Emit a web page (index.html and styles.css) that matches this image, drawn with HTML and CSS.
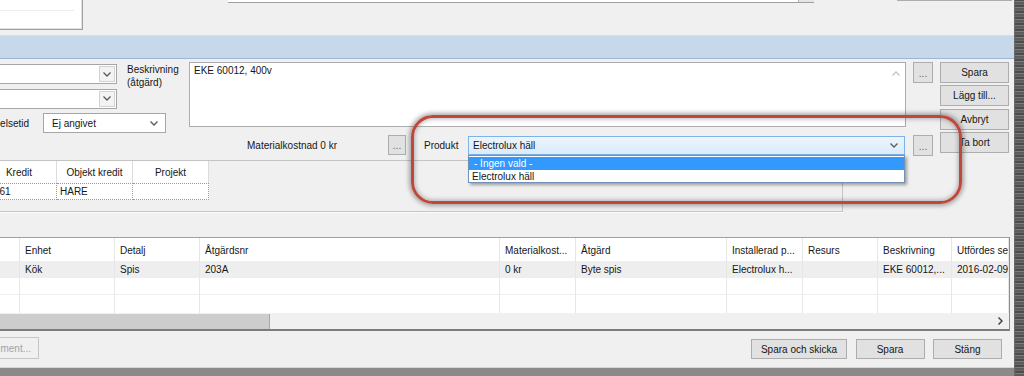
FILE: index.html
```html
<!DOCTYPE html>
<html lang="sv">
<head>
    <meta charset="utf-8"/>
    <title>Åtgärd</title>
    <link rel="stylesheet" href="styles.css">
</head>
<body>
<div class="screen">
    <div class="window">
        <div class="top">
            <div class="list-box"><div class="list-row"></div></div>
            <div class="field-box"><span class="field-arrow"></span></div>
            <div class="button-edge"></div>
        </div>
        <div class="band"></div>

        <div class="form">
            <div class="form-main">
                <div class="upper">
                    <div class="fields">
                        <div class="combo span2">
                            <span class="combo-btn"><svg width="8" height="5" viewBox="0 0 8 5"><polyline points="0.5,0.5 4,4 7.5,0.5"/></svg></span>
                        </div>
                        <div class="combo span2 row2">
                            <span class="combo-btn"><svg width="8" height="5" viewBox="0 0 8 5"><polyline points="0.5,0.5 4,4 7.5,0.5"/></svg></span>
                        </div>
                        <div class="clip-label">Händelsetid</div>
                        <div class="combo plain">
                            <span>Ej angivet</span>
                            <svg width="8" height="5" viewBox="0 0 8 5"><polyline points="0.5,0.5 4,4 7.5,0.5"/></svg>
                        </div>
                        <div class="desc-label">Beskrivning<br>(åtgärd)</div>
                    </div>
                    <div class="desc">
                        <span class="desc-text">EKE 60012, 400v</span>
                        <span class="desc-scroll"><svg width="8" height="5" viewBox="0 0 8 5"><polyline points="0.5,4.5 4,1 7.5,4.5"/></svg></span>
                    </div>
                    <div class="dots">...</div>
                </div>

                <div class="mid">
                    <span class="cost">Materialkostnad 0 kr</span>
                    <div class="dots small">...</div>
                    <span class="prod-label">Produkt</span>
                    <div class="prod-combo">
                        <span>Electrolux häll</span>
                        <svg width="8" height="5" viewBox="0 0 8 5"><polyline points="0.5,0.5 4,4 7.5,0.5"/></svg>
                        <div class="drop">
                            <div class="drop-item active">- Ingen vald -</div>
                            <div class="drop-item">Electrolux häll</div>
                        </div>
                    </div>
                    <div class="dots">...</div>
                </div>

                <div class="panel">
                    <div class="mini">
                        <div class="mini-head first">Kredit</div>
                        <div class="mini-head">Objekt kredit</div>
                        <div class="mini-head">Projekt</div>
                        <div class="mini-cell cut">061</div>
                        <div class="mini-cell">HARE</div>
                        <div class="mini-cell"></div>
                    </div>
                </div>
            </div>

            <div class="side">
                <div class="btn">Spara</div>
                <div class="btn">Lägg till...</div>
                <div class="btn">Avbryt</div>
                <div class="btn">Ta bort</div>
            </div>
        </div>

        <div class="grid">
            <div class="row head">
                <span></span><span>Enhet</span><span>Detalj</span><span>Åtgärdsnr</span><span>Materialkost...</span><span>Åtgärd</span><span>Installerad p...</span><span>Resurs</span><span>Beskrivning</span><span>Utfördes senast</span>
            </div>
            <div class="row data selected">
                <span></span><span>Kök</span><span>Spis</span><span>203A</span><span>0 kr</span><span>Byte spis</span><span>Electrolux h...</span><span></span><span>EKE 60012,...</span><span>2016-02-09</span>
            </div>
            <div class="row data">
                <span></span><span></span><span></span><span></span><span></span><span></span><span></span><span></span><span></span><span></span>
            </div>
            <div class="row data last">
                <span></span><span></span><span></span><span></span><span></span><span></span><span></span><span></span><span></span><span></span>
            </div>
            <div class="hscroll">
                <div class="thumb"></div>
                <svg class="hs-arrow" width="5" height="8" viewBox="0 0 5 8"><polyline points="0.5,0.5 4,4 0.5,7.5"/></svg>
            </div>
        </div>

        <div class="bottom">
            <div class="btn disabled">Dokument...</div>
            <div class="actions">
                <div class="btn wide">Spara och skicka</div>
                <div class="btn">Spara</div>
                <div class="btn">Stäng</div>
            </div>
        </div>
        <div class="edge"></div>
    </div>
    <div class="desk"></div>

    <div class="callout"></div>
</div>
</body>
</html>
```

FILE: styles.css
```css
* {
    box-sizing: border-box;
}
body {
    margin: 0;
    width: 1024px;
    height: 376px;
    overflow: hidden;
    background: #f0f0f0;
    font-family: "Liberation Sans", Arial, sans-serif;
    font-size: 10px;
    color: #161616;
}
svg polyline {
    fill: none;
    stroke: #5a5a5a;
    stroke-width: 1.3;
}
.screen {
    position: relative;
    display: flex;
    height: 376px;
}
.window {
    width: 1015px;
    display: flex;
    flex-direction: column;
    border-right: 1px solid #6a6a6a;
}
.desk {
    flex: 1;
    background: repeating-linear-gradient(0deg, #5c5c5c 0 2px, #7c7c7c 2px 3px, #4c4c4c 3px 5px, #686868 5px 6px);
}

/* top strip */
.top {
    height: 35px;
    display: flex;
    align-items: flex-start;
}
.list-box {
    width: 83px;
    height: 30px;
    background: #fff;
    border-right: 1px solid #a0a0a0;
    border-bottom: 1px solid #a0a0a0;
    box-shadow: inset -1px -1px 0 #e2e2e2;
    padding-top: 10px;
}
.list-row {
    height: 1px;
    margin-right: 8px;
    background: #ececec;
}
.field-box {
    margin-left: 145px;
    width: 586px;
    height: 3px;
    display: flex;
    justify-content: flex-end;
    background: #fff;
    border-bottom: 1px solid #a0a0a0;
}
.field-arrow {
    width: 16px;
    background: #e6e6e6;
    border-left: 1px solid #b0b0b0;
}
.button-edge {
    margin-left: 83px;
    width: 115px;
    height: 1px;
    background: #adadad;
}
.band {
    height: 24px;
    background: #c7d8ea;
    border-top: 1px solid #d3e0ee;
    border-bottom: 1px solid #9fb5d3;
}

/* form */
.form {
    height: 178px;
    display: flex;
    gap: 7px;
    padding-top: 3px;
}
.form-main {
    width: 933px;
    display: flex;
    flex-direction: column;
}
.upper {
    height: 73px;
    display: flex;
    align-items: flex-start;
}
.fields {
    width: 189px;
    display: grid;
    grid-template-columns: 43px 74px 10px 62px;
    grid-template-rows: 20px 20px 20px;
    row-gap: 4.5px;
    padding-top: 2px;
}
.combo {
    height: 20px;
    background: #fff;
    border: 1px solid #a6a6a6;
    display: flex;
    align-items: center;
}
.combo.span2 {
    grid-column: 1 / 3;
    grid-row: 1;
    border-left: none;
}
.combo.row2 {
    grid-row: 2;
}
.combo-btn {
    margin: 1px 1px 1px auto;
    width: 16px;
    height: 16px;
    border: 1px solid #d2d2d2;
    background: #f3f3f3;
    display: flex;
    align-items: center;
    justify-content: center;
}
.combo.plain {
    grid-column: 2 / 5;
    grid-row: 3;
    width: 123px;
    padding: 0 7px 0 8px;
    justify-content: space-between;
}
.clip-label {
    grid-column: 1;
    grid-row: 3;
    display: flex;
    justify-content: flex-end;
    align-items: center;
    overflow: hidden;
    white-space: nowrap;
    padding-right: 14px;
}
.desc-label {
    grid-column: 4;
    grid-row: 1 / 3;
    line-height: 12.5px;
}
.desc {
    width: 717px;
    height: 65px;
    background: #fff;
    border: 1px solid #acacac;
    display: flex;
    padding: 2px 0 0 4px;
    line-height: 11px;
}
.desc-scroll {
    margin-left: auto;
    width: 18px;
    display: flex;
    justify-content: center;
    padding-top: 6px;
}
.desc-scroll polyline {
    stroke: #c4c4c4;
}
.dots {
    width: 20px;
    height: 21px;
    margin-left: 7px;
    background: #e1e1e1;
    border: 1px solid #adadad;
    color: #666;
    display: flex;
    justify-content: center;
    align-items: flex-end;
    padding-bottom: 3px;
    line-height: 1;
}
.mid {
    height: 20px;
    display: flex;
    align-items: center;
    padding-left: 247px;
}
.cost {
    width: 141px;
}
.dots.small {
    width: 18px;
    height: 20px;
    margin-left: 0;
}
.prod-label {
    width: 44px;
    margin-left: 18px;
}
.prod-combo {
    position: relative;
    width: 437px;
    height: 19px;
    display: flex;
    align-items: center;
    justify-content: space-between;
    padding: 0 6px 0 4px;
    background: linear-gradient(#edf5fd, #d9ebfb);
    border: 1px solid #7db3e8;
}
.drop {
    position: absolute;
    z-index: 2;
    top: 18px;
    left: -1px;
    width: 437px;
    height: 28px;
    background: #fff;
    border: 1px solid #7390b8;
    box-shadow: 2px 2px 3px rgba(0, 0, 0, 0.35);
    padding-top: 1px;
}
.drop-item {
    height: 13px;
    line-height: 13px;
    padding-left: 3px;
}
.drop-item.active {
    background: #3399ff;
    color: #fff;
    padding-left: 5px;
}
.mid > .dots:last-child {
    margin-left: 8px;
}
.panel {
    margin-top: 5px;
    width: 843px;
    height: 52px;
    border: 1px solid #c4c4c4;
    border-left: none;
    box-shadow: 0 1px 0 #fdfdfd;
}
.mini {
    width: 209px;
    display: grid;
    grid-template-columns: 57px 76px 76px;
}
.mini-head {
    height: 22px;
    background: #fff;
    border-right: 1px solid #dcdcdc;
    display: flex;
    align-items: center;
    justify-content: center;
}
.mini-head.first {
    justify-content: flex-end;
    padding-right: 24px;
}
.mini-cell {
    height: 17px;
    background: #fff;
    border-top: 1px dotted #9a9a9a;
    border-right: 1px dotted #9a9a9a;
    border-bottom: 1px dotted #9a9a9a;
    padding-left: 3px;
    line-height: 15px;
    overflow: hidden;
    white-space: nowrap;
}
.mini-cell.cut {
    text-indent: -9px;
}
.side {
    width: 69px;
    display: flex;
    flex-direction: column;
    gap: 2.4px;
}
.btn {
    height: 21px;
    background: #e1e1e1;
    border: 1px solid #adadad;
    display: flex;
    align-items: center;
    justify-content: center;
    white-space: nowrap;
}

/* main grid */
.grid {
    margin-right: 4px;
    border-top: 1px solid #a0a0a0;
    border-right: 1px solid #8d8d8d;
    border-bottom: 2px solid #7c7c7c;
    background: #fff;
    overflow: hidden;
}
.row {
    display: grid;
    grid-template-columns: 20px 95px 85px 300px 76px 151px 76px 75px 74px 1fr;
    height: 17px;
}
.row span {
    border-right: 1px solid #e6e6e6;
    padding-left: 5px;
    overflow: hidden;
    white-space: nowrap;
    line-height: 17px;
}
.row.head {
    height: 23px;
}
.row.head span {
    line-height: 25px;
}
.row.data {
    border-bottom: 1px solid #eeeeee;
}
.row.selected {
    background: #eeeeee;
}
.row.last {
    height: 18px;
    border-bottom: none;
}
.hscroll {
    height: 16px;
    display: flex;
    align-items: center;
    background: #f0f0f0;
}
.thumb {
    width: 270px;
    height: 15px;
    background: #cdcdcd;
    border-right: 1px solid #a8a8a8;
}
.hs-arrow {
    margin-left: auto;
    margin-right: 6px;
}
.hs-arrow polyline {
    stroke: #444;
    stroke-width: 1.5;
}

/* bottom bar */
.bottom {
    height: 36px;
    display: flex;
    align-items: flex-end;
    padding-bottom: 8px;
}
.btn.disabled {
    width: 80px;
    height: 22px;
    margin-left: -41px;
    background: #f0f0f0;
    border-color: #c6c6c6;
    color: #a3a3a3;
    justify-content: flex-end;
    padding-right: 7px;
}
.actions {
    margin-left: auto;
    margin-right: 12px;
    display: flex;
    gap: 8.5px;
}
.actions .btn {
    width: 69px;
    height: 20px;
}
.actions .btn.wide {
    width: 96px;
}
.edge {
    height: 9px;
    background: #8a8a8a;
    border-top: 1px solid #d6d6d6;
}

/* annotation drawn over the screenshot */
.callout {
    position: absolute;
    z-index: 3;
    left: 411px;
    top: 115px;
    width: 551px;
    height: 89px;
    border: 3px solid #c1473b;
    border-radius: 22px;
    box-shadow: 0 0 4px 2px rgba(70, 70, 70, 0.45), inset 0 0 4px 1px rgba(70, 70, 70, 0.4);
    pointer-events: none;
}
```
